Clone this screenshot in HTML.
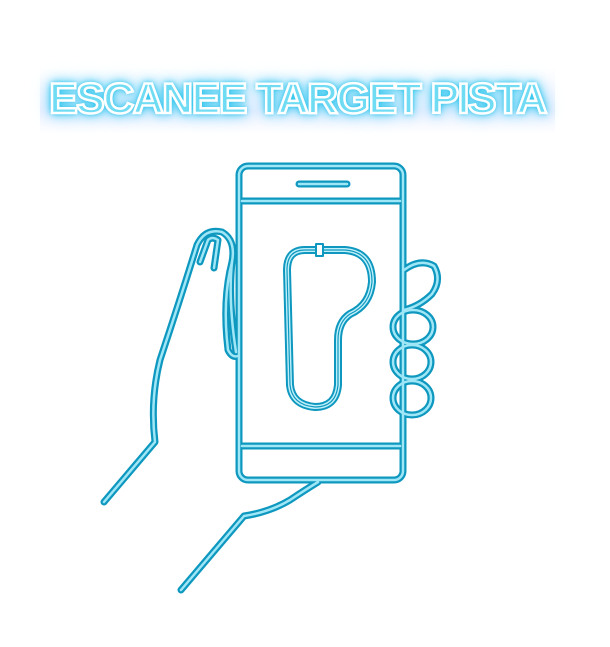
<!DOCTYPE html>
<html><head><style>
html,body{margin:0;padding:0;background:#fff;width:610px;height:647px;overflow:hidden}
.t{position:absolute;left:40px;top:68px;width:515px;height:66px;background:linear-gradient(#fff,#eef0ff 65%,#fff)}
.t span{position:absolute;left:0;width:100%;top:7px;text-align:center;font:bold 43px "Liberation Sans",sans-serif;color:#6fdcf4;letter-spacing:-1.6px;-webkit-text-stroke:2.5px #fff;text-shadow:0 0 3px #1fc0ea,0 0 7px #1fc0ea,0 0 12px #29c6ee,0 0 20px #9adfff}
svg{position:absolute;left:0;top:0}
</style></head><body>
<div class="t"><span>ESCANEE TARGET PISTA</span></div>
<svg width="610" height="647" viewBox="0 0 610 647" fill="none" stroke-linecap="round" stroke-linejoin="round">
<defs>
<g id="art">
 <rect x="239" y="166" width="164" height="314" rx="9"/>
 <line x1="242" y1="201" x2="400" y2="201"/>
 <line x1="242" y1="446" x2="400" y2="446"/>
 <line x1="299" y1="184" x2="347" y2="184"/>
 <path d="M104,502 L155,442 Q150,400 160,360 Q180,300 197,245 Q205,228 222,232 Q236,240 232,262 Q228,300 236,352"/>
 <path d="M200,262 L208,240 Q212,236 218,240 L214,268"/>
 <path d="M232,262 Q222,300 228,350 Q232,358 238,356"/>
 <path d="M181,590 L244,516 Q270,512 290,500 Q305,490 318,482"/>
 <path d="M404,270 Q420,258 434,266 Q442,280 432,294 Q420,306 404,310"/>
 <ellipse cx="413" cy="327" rx="20" ry="17"/>
 <ellipse cx="412" cy="362" rx="19" ry="17"/>
 <ellipse cx="412" cy="398" rx="19" ry="17"/>
</g>
<path id="trk" d="M287,270 Q287,250 305,250 L345,250 Q372,252 372,282 Q370,305 350,314 Q338,322 338,340 L338,385 Q336,407 315,407 Q292,405 290,385 Z"/>
</defs>
<use href="#art" stroke="#0e98bf" stroke-width="7"/>
<use href="#art" stroke="#9fe6f6" stroke-width="2.5"/>
<use href="#trk" stroke="#0e98bf" stroke-width="8"/>
<use href="#trk" stroke="#bff0fa" stroke-width="4"/>
<use href="#trk" stroke="#0e98bf" stroke-width="1.2"/>
<rect x="316" y="244" width="7" height="12" fill="#fff" stroke="#0e98bf" stroke-width="2"/>
</svg>
</body></html>
